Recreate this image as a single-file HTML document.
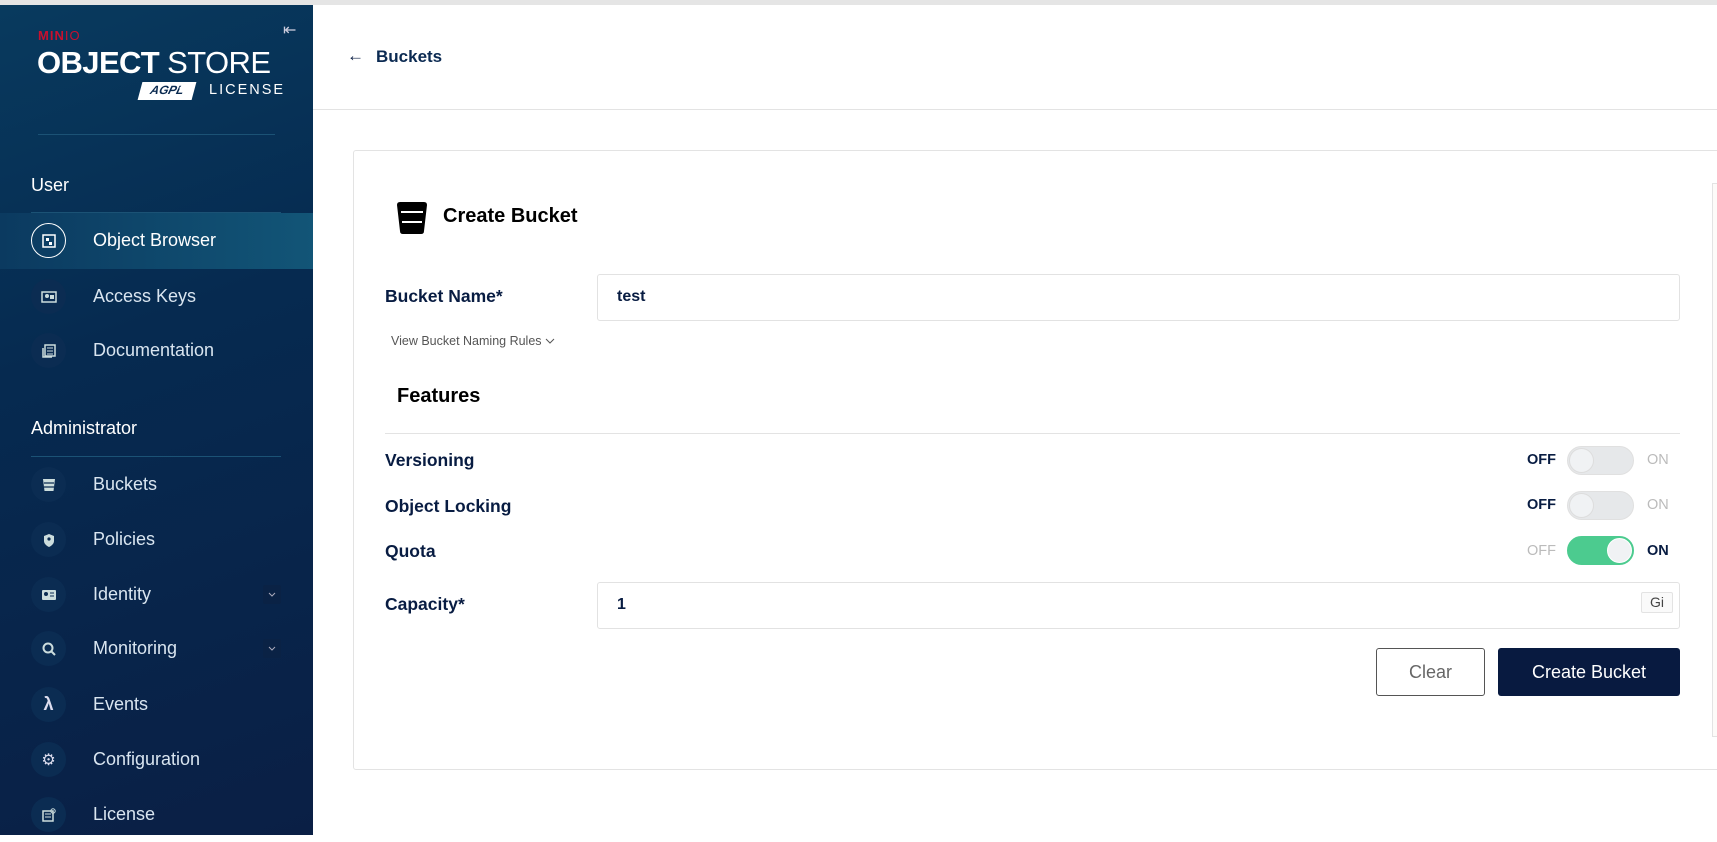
<!DOCTYPE html>
<html><head><meta charset="utf-8"><style>
*{margin:0;padding:0;box-sizing:border-box}
body{width:1717px;height:835px;overflow:hidden;background:#fff;font-family:"Liberation Sans",sans-serif;position:relative}
.abs{position:absolute}
#top{left:0;top:0;width:1717px;height:5px;background:#e5e5e5}
#side{left:0;top:5px;width:313px;height:830px;background:linear-gradient(160deg,#083a5e 0%,#062a50 40%,#0a1f45 100%)}
.sec{color:#fff;font-size:18px;left:31px}
.sep{left:31px;width:250px;height:1px;background:#1b5275}
.item{left:0;width:313px;height:55px}
.item .ic{position:absolute;left:31px;top:10px;width:35px;height:35px;border-radius:50%;background:#0b2c52;display:flex;align-items:center;justify-content:center}
.item .tx{position:absolute;left:93px;top:17px;color:#d9e5f0;font-size:18px}
.chev{position:absolute;left:263px;top:18px;width:18px;height:19px;background:#0a2245;border-radius:2px}
.lbl{color:#081c42;font-weight:bold;font-size:17.5px}
.inp{border:1px solid #e2e2e2;border-radius:3px;background:#fff}
.tog{width:67px;height:29px;border-radius:15px;border:1px solid #e0e0e0;background:#e6e8ea}
.tog .k{position:absolute;top:1px;width:25px;height:25px;border-radius:50%;background:#f0f2f4;border:1px solid #ddd}
.off{font-size:14.5px;font-weight:bold;color:#081c42}
.dim{font-size:14.5px;color:#bbb}
</style></head><body>
<div id="top" class="abs"></div>
<div id="side" class="abs"></div>
<div class="abs" style="left:38px;top:28px;color:#c8102e;font-weight:bold;font-size:13px;letter-spacing:1px">MIN<span style="font-weight:normal">IO</span></div>
<div class="abs" style="left:37px;top:45px;color:#fff;font-size:31px;letter-spacing:-0.6px"><b>OBJECT</b> STORE</div>
<div class="abs" style="left:140px;top:82px;width:54px;height:18px;background:#fff;transform:skewX(-15deg);color:#0a2a50;font-size:12px;font-weight:bold;font-style:italic;text-align:center;line-height:17px;overflow:hidden">AGPL</div>
<div class="abs" style="left:178px;top:79px;color:#fff;font-size:18px;font-weight:bold">&#8771;</div>
<div class="abs" style="left:209px;top:82px;color:#fff;font-size:14.5px;letter-spacing:2px">LICENSE</div>
<div class="abs" style="left:283px;top:20px;color:#ccd;font-size:16px">&#8676;</div>
<div class="abs sep" style="left:38px;top:134px;width:237px"></div>

<div class="abs sec" style="top:175px">User</div>
<div class="abs sep" style="top:212px"></div>
<div class="abs" style="left:0;top:213px;width:313px;height:56px;background:linear-gradient(90deg,#0b3a60,#125577)"></div>
<div class="abs item" style="top:213px"><div class="ic" style="background:transparent;border:1.5px solid #fff;top:10px"><svg width="14" height="14" viewBox="0 0 14 14"><rect x="1" y="1" width="12" height="12" fill="none" stroke="#fff" stroke-width="1.5"/><rect x="4" y="4" width="3" height="3" fill="#fff"/><rect x="7" y="8" width="3" height="3" fill="#fff"/></svg></div><div class="tx" style="color:#fff">Object Browser</div></div>
<div class="abs item" style="top:269px"><div class="ic"><svg width="16" height="12"><rect x="1" y="1" width="14" height="10" fill="none" stroke="#cdd" stroke-width="1.5"/><circle cx="6" cy="5" r="2" fill="#cdd"/><rect x="9" y="4" width="4" height="4" fill="#cdd"/></svg></div><div class="tx">Access Keys</div></div>
<div class="abs item" style="top:323px"><div class="ic"><svg width="14" height="14"><rect x="3" y="1" width="10" height="11" fill="none" stroke="#cdd" stroke-width="1.5"/><path d="M1 4v9h9" fill="none" stroke="#cdd" stroke-width="1.5"/><path d="M5 4h6M5 7h6M5 10h6" stroke="#cdd"/></svg></div><div class="tx">Documentation</div></div>

<div class="abs sec" style="top:418px">Administrator</div>
<div class="abs sep" style="top:456px"></div>
<div class="abs item" style="top:457px"><div class="ic"><svg width="14" height="14"><path d="M1 1h12l-1.5 12h-9z" fill="#cdd"/><path d="M2 5h10M2 9h10" stroke="#0b2c52" stroke-width="1.2"/></svg></div><div class="tx">Buckets</div></div>
<div class="abs item" style="top:512px"><div class="ic"><svg width="12" height="14"><path d="M6 1l5 2v5c0 3-3 5-5 6-2-1-5-3-5-6V3z" fill="#cdd"/><circle cx="6" cy="6" r="1.6" fill="#0b2c52"/></svg></div><div class="tx">Policies</div></div>
<div class="abs item" style="top:567px"><div class="ic"><svg width="16" height="12"><rect x="1" y="1" width="14" height="10" rx="1" fill="#cdd"/><circle cx="5" cy="5" r="2" fill="#0b2c52"/><path d="M9 4h4M9 7h4" stroke="#0b2c52"/></svg></div><div class="tx">Identity</div><div class="chev"><svg width="18" height="19"><path d="M6 8l3 3 3-3" fill="none" stroke="#aab" stroke-width="1"/></svg></div></div>
<div class="abs item" style="top:621px"><div class="ic"><svg width="14" height="14"><circle cx="6" cy="6" r="4.5" fill="none" stroke="#cdd" stroke-width="2"/><path d="M9 9l4 4" stroke="#cdd" stroke-width="2"/></svg></div><div class="tx">Monitoring</div><div class="chev"><svg width="18" height="19"><path d="M6 8l3 3 3-3" fill="none" stroke="#aab" stroke-width="1"/></svg></div></div>
<div class="abs item" style="top:677px"><div class="ic" style="color:#dde;font-size:18px;font-weight:bold">λ</div><div class="tx">Events</div></div>
<div class="abs item" style="top:732px"><div class="ic" style="color:#dde;font-size:16px">⚙</div><div class="tx">Configuration</div></div>
<div class="abs item" style="top:787px"><div class="ic"><svg width="14" height="14"><rect x="1" y="3" width="10" height="10" fill="none" stroke="#cdd" stroke-width="1.5"/><path d="M3 6h6M3 9h6" stroke="#cdd"/><circle cx="11" cy="3" r="2.2" fill="none" stroke="#cdd"/></svg></div><div class="tx">License</div></div>

<div class="abs" style="left:313px;top:109px;width:1404px;height:1px;background:#e3e3e3"></div>
<div class="abs" style="left:347px;top:46px;color:#081c42;font-size:17px;font-weight:bold">&#8592;</div>
<div class="abs" style="left:376px;top:47px;color:#0b2a52;font-size:17px;font-weight:bold">Buckets</div>

<div class="abs" style="left:353px;top:150px;width:1380px;height:620px;border:1px solid #e3e3e3;border-radius:3px"></div>
<div class="abs" style="left:1712px;top:183px;width:10px;height:554px;border:1px solid #e3e3e3;background:#fdfbf9"></div>
<svg class="abs" style="left:396px;top:202px" width="32" height="32" viewBox="0 0 32 32"><path d="M1 3Q1 0 4 0h24q3 0 3 3l-3 26q0 3-3 3H7q-3 0-3-3z" fill="#000"/><path d="M5 10h22M6 20h20" stroke="#fff" stroke-width="2"/></svg>
<div class="abs" style="left:443px;top:205px;font-size:20px;font-weight:bold;color:#000">Create Bucket</div>

<div class="abs lbl" style="left:385px;top:286px">Bucket Name*</div>
<div class="abs inp" style="left:597px;top:274px;width:1083px;height:47px"></div>
<div class="abs" style="left:617px;top:288px;font-size:16px;font-weight:bold;color:#081c42">test</div>
<div class="abs" style="left:391px;top:334px;font-size:12.5px;color:#555">View Bucket Naming Rules <svg width="10" height="8"><path d="M1 2l4 4 4-4" fill="none" stroke="#555"/></svg></div>

<div class="abs" style="left:397px;top:385px;font-size:20px;font-weight:bold;color:#000">Features</div>
<div class="abs" style="left:385px;top:433px;width:1295px;height:1px;background:#e3e3e3"></div>

<div class="abs lbl" style="left:385px;top:450px">Versioning</div>
<div class="abs off" style="left:1527px;top:452px">OFF</div>
<div class="abs tog" style="left:1567px;top:446px"><div class="k" style="left:1px"></div></div>
<div class="abs dim" style="left:1647px;top:452px">ON</div>

<div class="abs lbl" style="left:385px;top:496px">Object Locking</div>
<div class="abs off" style="left:1527px;top:497px">OFF</div>
<div class="abs tog" style="left:1567px;top:491px"><div class="k" style="left:1px"></div></div>
<div class="abs dim" style="left:1647px;top:497px">ON</div>

<div class="abs lbl" style="left:385px;top:541px">Quota</div>
<div class="abs dim" style="left:1527px;top:543px">OFF</div>
<div class="abs tog" style="left:1567px;top:536px;background:#4ccb8f;border-color:#4ccb8f"><div class="k" style="left:39px;border-color:#fff"></div></div>
<div class="abs off" style="left:1647px;top:543px">ON</div>

<div class="abs lbl" style="left:385px;top:594px">Capacity*</div>
<div class="abs inp" style="left:597px;top:582px;width:1083px;height:47px"></div>
<div class="abs" style="left:617px;top:596px;font-size:16px;font-weight:bold;color:#081c42">1</div>
<div class="abs" style="left:1641px;top:592px;width:32px;height:21px;border:1px solid #e3e3e3;border-radius:2px;background:#fafafa;font-size:14px;color:#444;text-align:center;line-height:19px">Gi</div>

<div class="abs" style="left:1376px;top:648px;width:109px;height:48px;border:1px solid #555;border-radius:3px;font-size:18px;color:#666;text-align:center;line-height:46px">Clear</div>
<div class="abs" style="left:1498px;top:648px;width:182px;height:48px;background:#081a40;border-radius:3px;font-size:18px;color:#fff;text-align:center;line-height:48px">Create Bucket</div>
</body></html>
